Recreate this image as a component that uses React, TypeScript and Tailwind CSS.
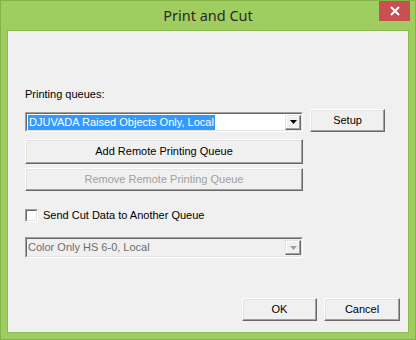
import React from 'react';

const ui = { fontFamily: '"Liberation Sans", Arial, sans-serif' };

function Raised({ children, className = '', disabled = false }: { children: React.ReactNode; className?: string; disabled?: boolean }) {
    return (
        <div
            className={`flex items-center justify-center bg-[#f0f0f0] border border-t-white border-l-white border-b-[#696969] border-r-[#696969] shadow-[inset_-1px_-1px_0_#a0a0a0,inset_1px_1px_0_#e3e3e3] text-[11px] ${disabled ? 'text-[#a0a0a0]' : 'text-black'} ${className}`}
        >
            {children}
        </div>
    );
}

function Arrow({ disabled = false }: { disabled?: boolean }) {
    return (
        <div className="w-[16px] h-[15px] flex items-center justify-center bg-[#f0f0f0] border border-t-[#e3e3e3] border-l-[#e3e3e3] border-b-[#696969] border-r-[#696969] shadow-[inset_-1px_-1px_0_#a0a0a0,inset_1px_1px_0_#fff]">
            <svg width="7" height="4" viewBox="0 0 7 4">
                <polygon points="0,0 7,0 3.5,4" fill={disabled ? '#a0a0a0' : '#000'} />
            </svg>
        </div>
    );
}

function Combo({ children, disabled = false, className = '' }: { children: React.ReactNode; disabled?: boolean; className?: string }) {
    return (
        <div className={`w-[278px] border border-t-[#a0a0a0] border-l-[#a0a0a0] border-b-white border-r-white ${className}`}>
            <div className={`h-full flex items-center border border-t-[#696969] border-l-[#696969] border-b-[#e3e3e3] border-r-[#e3e3e3] ${disabled ? 'bg-[#f0f0f0]' : 'bg-white'}`}>
                <div className="flex-1 flex items-center pl-[1px] text-[11px] leading-[15px]">{children}</div>
                <Arrow disabled={disabled} />
            </div>
        </div>
    );
}

export default function App() {
    return (
        <div style={ui} className="w-[416px] h-[340px] flex flex-col bg-[#a0cd60] border border-[#84b348] select-none">
            {/* title bar */}
            <div className="h-[29px] relative flex justify-center">
                <span style={{ fontFamily: '"Noto Sans", "Open Sans", sans-serif' }} className="mt-[4px] text-[14.5px] text-[#2a2a2a] leading-[20px]">
                    Print and Cut
                </span>
                <div className="absolute top-0 right-[5px] w-[31px] h-[20px] bg-[#c75050] flex items-center justify-center">
                    <svg width="10" height="10" viewBox="0 0 10 10">
                        <path d="M1 1L9 9M9 1L1 9" stroke="#fff" strokeWidth="2" />
                    </svg>
                </div>
            </div>

            {/* client area */}
            <div className="flex-1 mx-[6px] mb-[6px] border border-[#8cba52] bg-[#f0f0f0] flex flex-col pl-[17px] pr-[8px]">
                <div className="mt-[57px] text-[11px] leading-[13px] text-black">Printing queues:</div>

                <div className="mt-[8px] flex items-start">
                    <Combo className="mt-[3px] h-[20px]">
                        <span className="bg-[#3399ff] text-white px-[1px]">DJUVADA Raised Objects Only, Local</span>
                    </Combo>
                    <Raised className="ml-[7px] w-[75px] h-[23px]">Setup</Raised>
                </div>

                <Raised className="mt-[7px] w-[278px] h-[25px]">Add Remote Printing Queue</Raised>
                <Raised disabled className="mt-[4px] w-[278px] h-[23px]">Remove Remote Printing Queue</Raised>

                <div className="mt-[18px] flex items-center">
                    <div className="w-[13px] h-[13px] border border-t-[#a0a0a0] border-l-[#a0a0a0] border-b-white border-r-white">
                        <div className="w-full h-full bg-white border border-t-[#696969] border-l-[#696969] border-b-[#e3e3e3] border-r-[#e3e3e3]" />
                    </div>
                    <span className="ml-[5px] text-[11px] leading-[13px] text-black">Send Cut Data to Another Queue</span>
                </div>

                <Combo disabled className="mt-[15px] h-[21px]">
                    <span className="text-[#6d6d6d]">Color Only HS 6-0, Local</span>
                </Combo>

                <div className="mt-[40px] flex justify-end gap-[7px]">
                    <Raised className="w-[75px] h-[23px]">OK</Raised>
                    <Raised className="w-[76px] h-[23px]">Cancel</Raised>
                </div>
            </div>
        </div>
    );
}
